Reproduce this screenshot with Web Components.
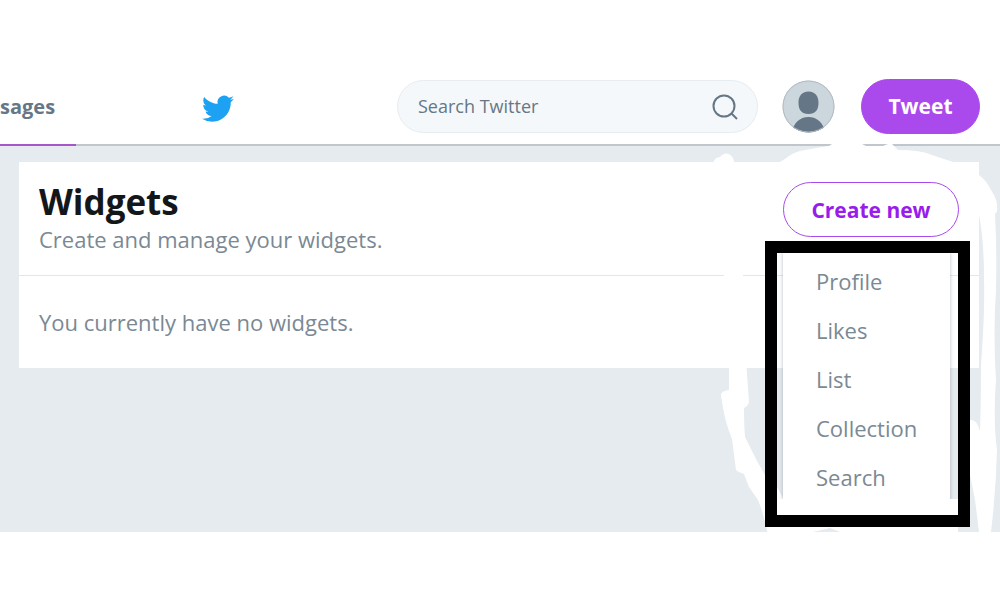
<!DOCTYPE html>
<html lang="en">
<head>
<meta charset="utf-8">
<title>Widgets</title>
<style>
  body { margin: 0; background: #fff; font-family: "Open Sans", "Noto Sans", sans-serif; color: #657786; }
</style>
</head>
<body>
<settings-page></settings-page>
<script>
const define = (name, html) => customElements.define(name, class extends HTMLElement {
  constructor() {
    super();
    const t = document.createElement('template');
    t.innerHTML = html;
    this.attachShadow({ mode: 'open' }).append(t.content.cloneNode(true));
  }
});

define('nav-tab', `
<style>
  :host { display: flex; align-self: stretch; margin-bottom: -2px; width: 76px; box-sizing: border-box; border-bottom: 2px solid #a656c9; padding-top: 2px; align-items: center; }
  a { color: #657786; font-size: 20px; line-height: 28px; font-weight: 700; text-decoration: none; white-space: nowrap; }
</style>
<a href="#messages"><slot></slot></a>`);

define('brand-logo', `
<style>
  :host { display: block; }
  a, svg { display: block; }
</style>
<a href="#home" aria-label="Home"><svg width="32" height="28" viewBox="0 1 24 21" fill="#1da1f2"><path d="M23.953 4.57a10 10 0 01-2.825.775 4.958 4.958 0 002.163-2.723c-.951.555-2.005.959-3.127 1.184a4.92 4.92 0 00-8.384 4.482C7.69 8.095 4.067 6.13 1.64 3.162a4.822 4.822 0 00-.666 2.475c0 1.71.87 3.213 2.188 4.096a4.904 4.904 0 01-2.228-.616v.06a4.923 4.923 0 003.946 4.827 4.996 4.996 0 01-2.212.085 4.936 4.936 0 004.604 3.417 9.867 9.867 0 01-6.102 2.105c-.39 0-.779-.023-1.17-.067a13.995 13.995 0 007.557 2.209c9.053 0 13.998-7.496 13.998-13.985 0-.21 0-.42-.015-.63A9.935 9.935 0 0024 4.59z"/></svg></a>`);

define('search-box', `
<style>
  :host { display: block; width: 361px; }
  form { display: flex; align-items: center; height: 53px; box-sizing: border-box; margin: 0; padding: 0 19px 0 20px; border: 1px solid #e6ecf0; border-radius: 27px; background: #f5f8fa; }
  input { flex: 1; min-width: 0; padding: 0; border: 0; outline: 0; background: none; font: 18px/26px "Open Sans", sans-serif; color: #657786; }
  input::placeholder { color: #657786; opacity: 1; }
  button { padding: 2px 0 0; border: 0; background: none; }
  svg { display: block; }
</style>
<form role="search"><input type="text" placeholder="Search Twitter" aria-label="Search Twitter">
<button type="button" aria-label="Search"><svg width="26" height="26" viewBox="0 0 26 26" fill="none" stroke="#657786" stroke-width="2"><circle cx="12" cy="12" r="10.500"/><path d="M19.500 19.500L25 25"/></svg></button></form>`);

define('user-avatar', `
<style>
  :host { display: block; }
  button { display: block; padding: 0; border: 0; background: none; border-radius: 50%; }
  svg { display: block; }
</style>
<button type="button" aria-label="Account"><svg width="53" height="53" viewBox="0 0 53 53"><defs><clipPath id="c"><circle cx="26.500" cy="26.500" r="26"/></clipPath></defs><g clip-path="url(#c)"><path fill="#ccd6dd" d="M0 0h53v53H0z"/><path fill="#657786" d="M26.500 11.500c7 0 10 5 10 11 0 7.500-3 11.500-10 11.500s-10-4-10-11.500c0-6 3-11 10-11zM10 53C11 43 18 37 26.500 37S42 43 43 53z"/></g><circle cx="26.500" cy="26.500" r="25.500" fill="none" stroke="#b3bbc1"/></svg></button>`);

define('pill-button', `
<style>
  :host { display: block; }
  button { display: block; height: 55px; box-sizing: border-box; padding: 0; width: 119px; border: 1px solid #ab4aec; border-radius: 28px; background: #ab4aec; color: #fff; font: 700 21px/30px "Open Sans", sans-serif; white-space: nowrap; }
  :host([outline]) button { width: 176px; background: #fff; color: #981ceb; }
</style>
<button type="button"><slot></slot></button>`);

define('top-bar', `
<style>
  :host { display: flex; align-items: center; height: 76px; border-bottom: 2px solid #c0c6cb; }
  brand-logo { margin-left: 126px; padding-top: 3px; }
  .tools { display: flex; align-items: center; margin-left: auto; margin-right: 20px; }
  user-avatar { margin-left: 24px; margin-right: 26px; }
</style>
<nav-tab>sages</nav-tab><brand-logo></brand-logo>
<div class="tools"><search-box></search-box><user-avatar></user-avatar><pill-button>Tweet</pill-button></div>`);

define('create-menu', `
<style>
  :host { display: block; position: relative; z-index: 2; }
  nav { position: absolute; top: 59px; right: -11px; width: 205px; height: 286px; box-sizing: border-box; border: 12px solid #000; padding: 0 8px 0 6px; overflow: hidden; }
  nav::after { content: ""; position: absolute; left: 0; right: 0; bottom: 0; height: 16px; background: #fff; }
  ul { height: 100%; box-sizing: border-box; margin: 0; padding: 4px 0 0 33px; list-style: none; background: #fff; box-shadow: 0 0 4px rgba(80,90,110,.4); }
  a { display: block; font-size: 22px; line-height: 49px; color: #7a8994; text-decoration: none; }
</style>
<pill-button outline>Create new</pill-button>
<nav aria-label="Create new"><ul>
<li><a href="#profile">Profile</a></li><li><a href="#likes">Likes</a></li><li><a href="#list">List</a></li><li><a href="#collection">Collection</a></li><li><a href="#search">Search</a></li>
</ul></nav>`);

define('marker-strokes', `
<style>
  :host { display: block; position: absolute; top: 0; right: 0; z-index: 1; pointer-events: none; }
  svg { display: block; }
</style>
<svg width="300" height="388" viewBox="700 144 300 388" fill="#fff" aria-hidden="true">
<path d="M713 163Q715 157 720 157Q724 152 729 154Q734 157 734 163L740 170H713zM778 163L785 159Q792 153 800 151Q815 148 829 146L832 144H862L866 146H883L888 144H892L898 150Q921 150 932 155L953 162V170H778z"/>
<path d="M975 173Q984 176 991 190Q998 201 997 207Q998 212 995 214Q997 250 996 290Q993 335 996 380Q993 420 997 450Q996 490 991 532H979Q977 515 975 500L970 475V420Q977 419 980 431Q981 400 981 365Q985 310 984 280Q984 240 979 215L970 200z"/>
<path d="M724 268H743V285H724zM729 360H746L749 402Q748 406 744 408Q744 425 745 437L757 461L769 482L777 487L784 500H958V532H840L830 528L800 535H768Q764 515 758 500L749 487L744 474Q738 472 736 470L732 439Q724 420 721 395Q721 391 729 390z"/>
</svg>`);

define('widgets-card', `
<style>
  :host { display: block; background: #fff; }
  header { display: flex; justify-content: space-between; align-items: flex-start; padding: 20px 20px 18px; border-bottom: 1px solid #e1e8ed; }
  h1 { margin: 0; font-size: 35px; line-height: 40px; font-weight: 700; color: #14171a; }
  p { margin: 0; font-size: 22px; line-height: 35px; color: #7a8994; }
  .empty { padding: 29px 20px 28px; }
</style>
<header><div><h1>Widgets</h1><p>Create and manage your widgets.</p></div><create-menu></create-menu></header>
<p class="empty">You currently have no widgets.</p>`);

define('settings-page', `
<style>
  :host { display: block; padding: 68px 0; }
  main { position: relative; box-sizing: border-box; min-height: 386px; padding: 16px 21px 16px 19px; background: #e6ebef; }
  marker-strokes { top: -2px; }
</style>
<top-bar></top-bar><main><widgets-card></widgets-card><marker-strokes></marker-strokes></main>`);
</script>
</body>
</html>
